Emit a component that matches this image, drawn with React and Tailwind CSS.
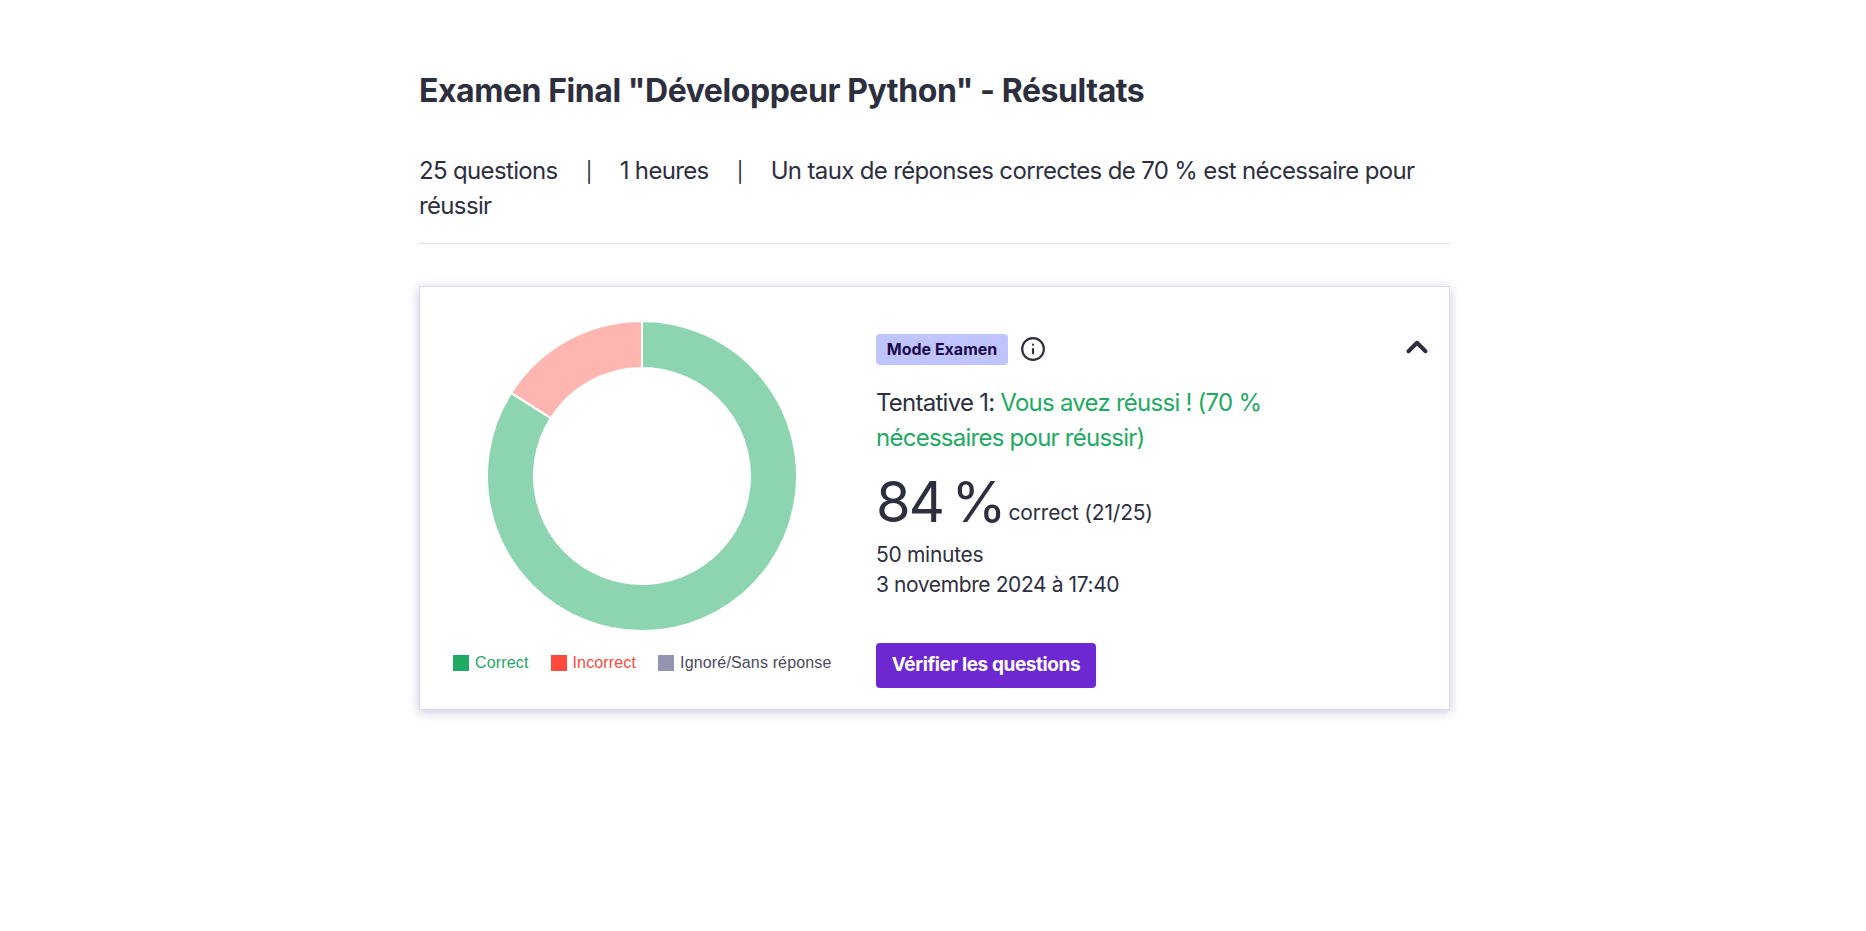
import { ChevronUp, Info } from 'lucide-react'

const cx = 156
const cy = 156

// ring segment between two angles, degrees clockwise from 12 o'clock
function arc(from, to, r0 = 108, r1 = 155) {
  const p = (r, a) => {
    const t = ((a - 90) * Math.PI) / 180
    return `${(cx + r * Math.cos(t)).toFixed(2)} ${(cy + r * Math.sin(t)).toFixed(2)}`
  }
  const large = to - from > 180 ? 1 : 0
  return `M${p(r1, from)} A${r1} ${r1} 0 ${large} 1 ${p(r1, to)} L${p(r0, to)} A${r0} ${r0} 0 ${large} 0 ${p(r0, from)} Z`
}

const legend = [
  { label: 'Correct', box: 'bg-[#1eaa62]', text: 'text-[#1eaa62]' },
  { label: 'Incorrect', box: 'bg-[#ff4a3d]', text: 'text-[#ff4a3d]' },
  { label: 'Ignoré/Sans réponse', box: 'bg-[#9394af]', text: 'text-[#4a4b5c]' },
]

export default function App() {
  return (
    <div className="min-h-[931px] bg-white font-['Inter',sans-serif] text-[#2d2f3e]">
      <div className="ml-[419px] w-[1031px] pt-[71px]">
        <h1 className="text-[32px] font-bold leading-[40px] tracking-[-0.44px]">
          Examen Final "Développeur Python" - Résultats
        </h1>

        <p className="mt-[42px] border-b border-[#dcdbec] pb-[20px] text-[24px] leading-[35px] tracking-[-0.65px]">
          25 questions
          <span className="mx-[28px] text-[20px] leading-none">|</span>
          1 heures
          <span className="mx-[28px] text-[20px] leading-none">|</span>
          Un taux de réponses correctes de 70 % est nécessaire pour
          <br />
          réussir
        </p>

        <div className="mt-[42px] flex h-[424px] border border-[#dcdbec] bg-white shadow-[0_2px_10px_rgba(70,70,140,0.3)]">
          <div className="flex w-[456px] shrink-0 flex-col pl-[33px] pt-[33px]">
            <svg width="312" height="312" viewBox="0 0 312 312" className="ml-[33px]">
              <path d={arc(0, 302.4)} fill="#8dd4b0" stroke="#fff" strokeWidth="2" strokeLinejoin="round" />
              <path d={arc(302.4, 360)} fill="#ffb5b0" stroke="#fff" strokeWidth="2" strokeLinejoin="round" />
            </svg>
            <ul className="mt-[21px] flex items-center gap-[22px] font-['Liberation_Sans',sans-serif] text-[16px] leading-[20px] tracking-[0.15px]">
              {legend.map(item => (
                <li key={item.label} className="flex items-center gap-[6px]">
                  <span className={`h-[16px] w-[16px] ${item.box}`} />
                  <span className={item.text}>{item.label}</span>
                </li>
              ))}
            </ul>
          </div>

          <div className="flex-1 pr-[15px] pt-[45px]">
            <div className="flex items-center justify-between">
              <div className="flex items-center gap-[12px]">
                <span className="flex h-[31px] w-[132px] items-center justify-center rounded-[4px] bg-[#c0c4fc] text-[16px] font-bold text-[#1c0a4a]">
                  Mode Examen
                </span>
                <Info size={26} strokeWidth={2} />
              </div>
              <ChevronUp size={34} strokeWidth={2.8} className="-translate-y-[2px]" />
            </div>

            <p className="mt-[19px] w-[420px] text-[24px] leading-[35px] tracking-[-0.75px]">
              Tentative 1: <span className="text-[#1eaa62]">Vous avez réussi !</span> <span className="text-[#1eaa62]">(70 %</span>
              <br />
              <span className="text-[#1eaa62]">nécessaires pour réussir)</span>
            </p>

            <p className="mt-[22px] flex items-baseline gap-[4px] leading-[50px]">
              <span className="text-[56px] tracking-[-2px] [word-spacing:-5px]">84 %</span>
              <span className="-translate-y-[2px] text-[21px] tracking-[-0.2px]">correct (21/25)</span>
            </p>

            <p className="text-[21px] leading-[30px] tracking-[-0.3px]">50 minutes</p>
            <p className="text-[21px] leading-[30px] tracking-[-0.4px]">3 novembre 2024 à 17:40</p>

            <button className="mt-[43px] h-[45px] w-[220px] rounded-[4px] bg-[#6d28d2] text-[19px] font-bold tracking-[-0.4px] text-white">
              Vérifier les questions
            </button>
          </div>
        </div>
      </div>
    </div>
  )
}
